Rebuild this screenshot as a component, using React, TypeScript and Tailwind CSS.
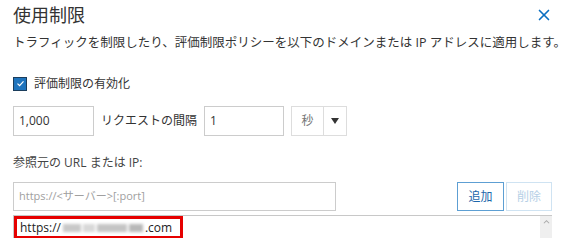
import { X } from "lucide-react"

const font = {
  fontFamily: '"Open Sans", "Noto Sans CJK JP", sans-serif'
}

function Checkbox() {
  return (
    <span className="flex h-[14px] w-[14px] items-center justify-center border border-[#1b3d5c] bg-[#1f74bd]">
      <svg viewBox="0 0 12 12" className="h-[9px] w-[9px]">
        <path d="M2 6.2 L4.8 9 L10 3.2" fill="none" stroke="white" strokeWidth="1.6" />
      </svg>
    </span>
  )
}

export default function App() {
  return (
    <div
      className="h-[238px] w-[567px] overflow-hidden bg-white pl-[13px] pr-[15px] text-[#333]"
      style={font}
    >
      <div className="flex items-start justify-between pt-[2px]">
        <h1 className="text-[18px] leading-[26px] text-[#333]">使用制限</h1>
        <X className="mt-[4px] -mr-[1px] h-[18px] w-[18px] text-[#0a6fc2]" strokeWidth={2.2} />
      </div>

      <p className="mt-[6px] whitespace-nowrap text-[12.5px] leading-[18px] text-[#333]">
        トラフィックを制限したり、評価制限ポリシーを以下のドメインまたは IP アドレスに適用します。
      </p>

      <label className="mt-[24px] flex h-[15px] items-center gap-[7px] text-[12px] text-[#333]">
        <Checkbox />
        <span>評価制限の有効化</span>
      </label>

      <div className="mt-[15px] flex h-[30px] items-stretch text-[12px]">
        <div className="flex w-[81px] items-center border border-[#ccc] px-[5px] text-[#333]">
          1,000
        </div>
        <span className="ml-[7px] flex items-center text-[12px] text-[#333]">
          リクエストの間隔
        </span>
        <div className="ml-[7px] flex w-[80px] items-center border border-[#ccc] px-[5px] text-[#333]">
          1
        </div>
        <div className="ml-[7px] flex w-[56px] border border-[#ddd]">
          <span className="flex w-[31px] items-center justify-center text-[#777]">秒</span>
          <span className="flex flex-1 items-center justify-center border-l border-[#ddd]">
            <svg viewBox="0 0 8 6" className="h-[6px] w-[8px]">
              <path d="M0 0 H8 L4 6 Z" fill="#333" />
            </svg>
          </span>
        </div>
      </div>

      <p className="mt-[18px] text-[12px] leading-[18px] text-[#444]">
        参照元の URL または IP:
      </p>

      <div className="mt-[10px] flex h-[29px] items-stretch justify-between">
        <div className="flex w-[323px] items-center border border-[#ccc] px-[5px] text-[11px] text-[#a0a0a0]">
          https://&lt;サーバー&gt;[:port]
        </div>
        <div className="flex gap-[2px]">
          <button className="w-[47px] border border-[#5d9fd3] text-[12px] text-[#1d67ab]">
            追加
          </button>
          <button className="w-[46px] border border-[#cfe3f2] text-[12px] text-[#b6d0e6]">
            削除
          </button>
        </div>
      </div>

      <div className="mt-[4px] flex h-[30px] border-t border-l border-[#c8c8c8]">
        <div className="flex-1">
          <div className="mt-[0px] flex h-[23px] w-[169px] items-center border-[3px] border-[#e60000] pl-[3px] text-[12px] text-[#222]">
            <span>https://</span>
            <span className="ml-[2px] flex h-[10px] w-[80px] items-center gap-[2px] blur-[1.5px]">
              <span className="h-[8px] w-[18px] bg-[#c8c8c8]" />
              <span className="h-[8px] w-[12px] bg-[#d8d8d8]" />
              <span className="h-[8px] w-[30px] bg-[#c4c4c4]" />
              <span className="h-[8px] w-[14px] bg-[#b8b8b8]" />
            </span>
            <span className="ml-[2px]">.com</span>
          </div>
        </div>
        <div className="flex w-[12px] justify-center bg-[#efefef] pt-[3px]">
          <svg viewBox="0 0 8 5" className="h-[5px] w-[7px]">
            <path d="M1 4.5 L4 1.5 L7 4.5" fill="none" stroke="#aaa" strokeWidth="1.2" />
          </svg>
        </div>
      </div>
    </div>
  )
}
